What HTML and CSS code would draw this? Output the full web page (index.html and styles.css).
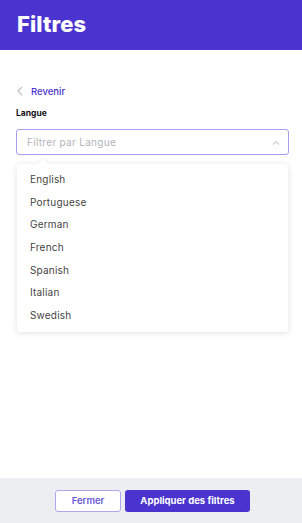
FILE: index.html
```html
<!DOCTYPE html>
<html lang="fr">
<head>
    <meta charset="UTF-8">
    <title>Filtres</title>
    <meta name="viewport" content="width=device-width, initial-scale=1.0">
    <link rel="stylesheet" href="styles.css">
</head>
<body>
    <header class="top-bar">
        <h1>Filtres</h1>
    </header>

    <main class="content">
        <a class="back-link" href="#">
            <svg class="back-icon" width="6" height="10" viewBox="0 0 6 10"><path d="M5 1 1 5l4 4" fill="none" stroke="#c4c4cc" stroke-width="1.3"/></svg>
            Revenir
        </a>

        <label class="field-label" for="langue">Langue</label>
        <div class="select-box">
            <input type="text" id="langue" placeholder="Filtrer par Langue">
            <svg class="select-arrow" width="8" height="5" viewBox="0 0 8 5"><path d="M1 4.5 4 1.5l3 3" fill="none" stroke="#cfcfd6" stroke-width="1.1"/></svg>
        </div>

        <ul class="options">
            <li>English</li>
            <li>Portuguese</li>
            <li>German</li>
            <li>French</li>
            <li>Spanish</li>
            <li>Italian</li>
            <li>Swedish</li>
        </ul>
    </main>

    <footer class="bottom-bar">
        <button class="btn btn-outline">Fermer</button>
        <button class="btn btn-primary">Appliquer des filtres</button>
    </footer>
</body>
</html>
```

FILE: styles.css
```css
* {
    box-sizing: border-box;
}

html, body {
    height: 100%;
}

body {
    margin: 0;
    font-family: 'Inter', 'Noto Sans', sans-serif;
    background: #fff;
    display: flex;
    flex-direction: column;
    color: #333;
}

.top-bar {
    height: 50px;
    background: #4a33cf;
    padding: 0 17px;
    display: flex;
    align-items: center;
}

.top-bar h1 {
    margin: 0;
    color: #fff;
    font-size: 22px;
    font-weight: 800;
    letter-spacing: 0.1px;
    padding-bottom: 2px;
}

.content {
    flex: 1;
    padding: 35px 13px 0 16px;
}

.back-link {
    display: flex;
    align-items: center;
    gap: 8px;
    color: #4a33cf;
    font-size: 9.5px;
    font-weight: 500;
    text-decoration: none;
    height: 12px;
}

.back-icon {
    margin-left: 1px;
}

.field-label {
    display: block;
    margin-top: 11px;
    font-size: 8.5px;
    font-weight: 700;
    color: #111;
}

.select-box {
    position: relative;
    margin-top: 11px;
}

.select-box input {
    width: 100%;
    height: 26px;
    border: 1px solid #a99bf0;
    border-radius: 3px;
    padding: 0 10px;
    font-family: inherit;
    font-size: 10px;
    letter-spacing: 0.3px;
    color: #333;
    outline: none;
}

.select-box input::placeholder {
    color: #b3b3ba;
}

.select-arrow {
    position: absolute;
    right: 9px;
    top: 11px;
}

.options {
    position: relative;
    list-style: none;
    margin: 9px 1px 0 1px;
    padding: 4px 0 5px;
    background: #fff;
    border-radius: 2px;
    box-shadow: 0 1px 6px rgba(0, 0, 0, 0.12);
}

.options::before {
    content: "";
    position: absolute;
    top: -4px;
    left: 22px;
    width: 8px;
    height: 8px;
    background: #fff;
    transform: rotate(45deg);
    box-shadow: -1px -1px 2px rgba(0, 0, 0, 0.05);
}

.options li {
    position: relative;
    height: 22.7px;
    line-height: 22.7px;
    padding-left: 13px;
    font-size: 10px;
    letter-spacing: 0.2px;
    color: #444;
}

.bottom-bar {
    height: 45px;
    background: #eceef2;
    display: flex;
    justify-content: center;
    align-items: center;
    gap: 4px;
    padding-left: 3px;
}

.btn {
    height: 22px;
    border-radius: 3px;
    font-family: inherit;
    font-size: 9.5px;
    font-weight: 700;
    cursor: pointer;
}

.btn-outline {
    width: 66px;
    background: #fff;
    color: #6a58d8;
    font-weight: 600;
    border: 1px solid #b0a5ec;
}

.btn-primary {
    width: 125px;
    background: #4a33cf;
    color: #fff;
    border: none;
}
```
